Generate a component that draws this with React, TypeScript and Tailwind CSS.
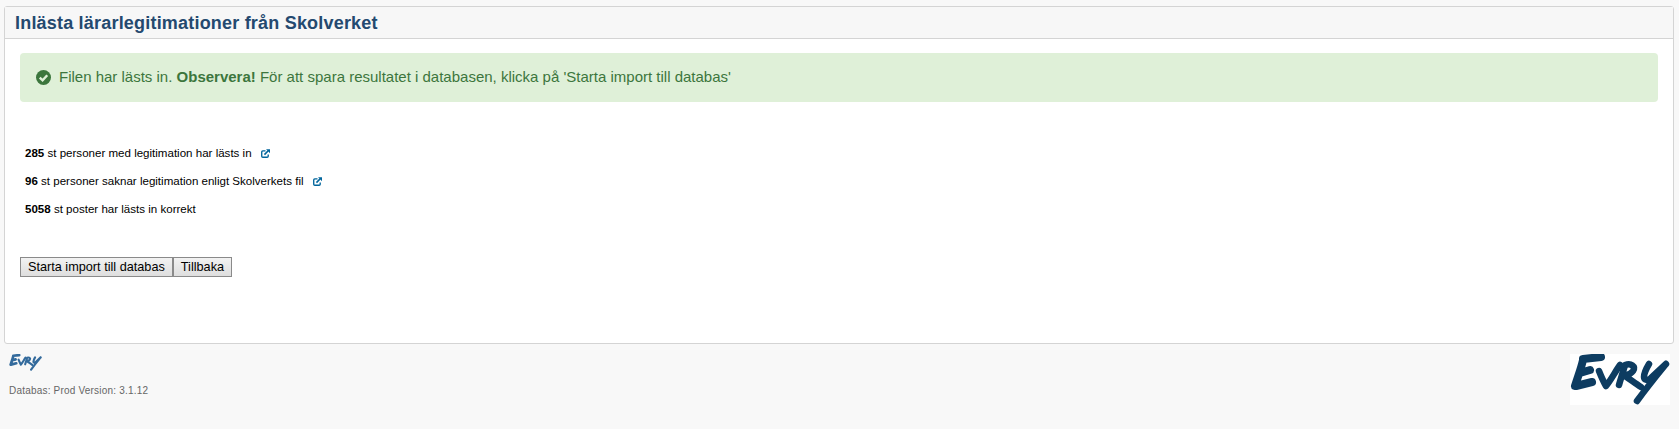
import React from 'react';

const EvryLogo: React.FC<{ className?: string; color: string }> = ({ className, color }) => (
  <svg className={className} viewBox="0 0 100 51" fill="none" stroke={color} strokeLinecap="round" strokeLinejoin="round">
    <path strokeWidth="8" d="M13 5 L31 3 M13 6 C11 15 8 22 5 32 M6 32 L22 28 M10 19 L20 16" />
    <path strokeWidth="6.5" d="M29 17 C31 22 33 27 36 32 C41 26 45 18 50 11" />
    <path strokeWidth="6.5" d="M49 31 C51 24 53 18 55 11 C61 9 66 12 63 17 C61 20 57 21 55 22 C61 26 66 30 71 33" />
    <path strokeWidth="6.5" d="M79 10 C76 15 74 19 74 23 C74 26 78 27 81 24 L96 10 M96 10 C87 21 78 32 67 47" />
  </svg>
);

const CheckCircle: React.FC = () => (
  <svg className="h-[15px] w-[15px] shrink-0" viewBox="0 0 16 16">
    <circle cx="8" cy="8" r="8" fill="#3c763d" />
    <path d="M4 8.2 L7 11 L12 5.6" fill="none" stroke="#dff0d8" strokeWidth="2.6" />
  </svg>
);

const LinkIcon: React.FC = () => (
  <svg className="ml-[9px] h-[9px] w-[9px] shrink-0" viewBox="0 0 10 10" fill="none" stroke="#00659c">
    <path strokeWidth="1.5" d="M5 2 H2 Q0.8 2 0.8 3.2 V8 Q0.8 9.2 2 9.2 H6.8 Q8 9.2 8 8 V6" />
    <path strokeWidth="1.8" d="M3.8 6.2 L8 2" />
    <path fill="#00659c" stroke="none" d="M5.6 0.3 H10 V4.7 Z" />
  </svg>
);

const rows = [
  { count: '285', text: 'st personer med legitimation har lästs in', link: true },
  { count: '96', text: 'st personer saknar legitimation enligt Skolverkets fil', link: true },
  { count: '5058', text: 'st poster har lästs in korrekt', link: false },
];

const buttonClass =
  'h-5 border border-[#8a8a8a] bg-gradient-to-b from-[#f2f2f2] to-[#dedede] px-[7px] text-[12.7px] leading-none text-black';

export default function App() {
  return (
    <div className="h-[429px] overflow-hidden bg-[#f8f8f8] pt-[6px] pr-[5px] pl-1 font-['Liberation_Sans',Arial,sans-serif]">
      <div className="h-[338px] rounded-[3px] border border-[#d4d4d4] bg-white">
        <div className="flex h-[32px] items-center border-b border-[#d4d4d4] bg-[#f7f7f7] pl-[10px]">
          <h1 className="text-[18px] leading-5 font-bold tracking-[0.2px] text-[#24496f]">Inlästa lärarlegitimationer från Skolverket</h1>
        </div>
        <div className="px-[15px] pt-[14px]">
          <div className="flex h-[49px] items-center gap-2 rounded-[4px] bg-[#dff0d8] pl-4 text-[15px] text-[#3c763d]">
            <CheckCircle />
            <p>
              Filen har lästs in. <b>Observera!</b> För att spara resultatet i databasen, klicka på 'Starta import till databas'
            </p>
          </div>
          <div className="mt-[44px] flex flex-col gap-[14px] pl-[5px] text-[11.55px] leading-[14px] text-black">
            {rows.map((row) => (
              <p key={row.count} className="flex items-center">
                <span>
                  <b>{row.count}</b> {row.text}
                </span>
                {row.link && <LinkIcon />}
              </p>
            ))}
          </div>
          <div className="mt-[41px] flex">
            <button className={buttonClass}>Starta import till databas</button>
            <button className={buttonClass}>Tillbaka</button>
          </div>
        </div>
      </div>
      <div className="flex items-start justify-between pt-[10px] pr-[4px] pl-[5px]">
        <div>
          <EvryLogo className="h-[17px] w-[33px]" color="#336a9c" />
          <p className="mt-[14px] text-[10px] leading-3 tracking-[0.2px] text-[#666666]">Databas: Prod Version: 3.1.12</p>
        </div>
        <EvryLogo className="h-[51px] w-[100px] bg-white" color="#0d3c61" />
      </div>
    </div>
  );
}
